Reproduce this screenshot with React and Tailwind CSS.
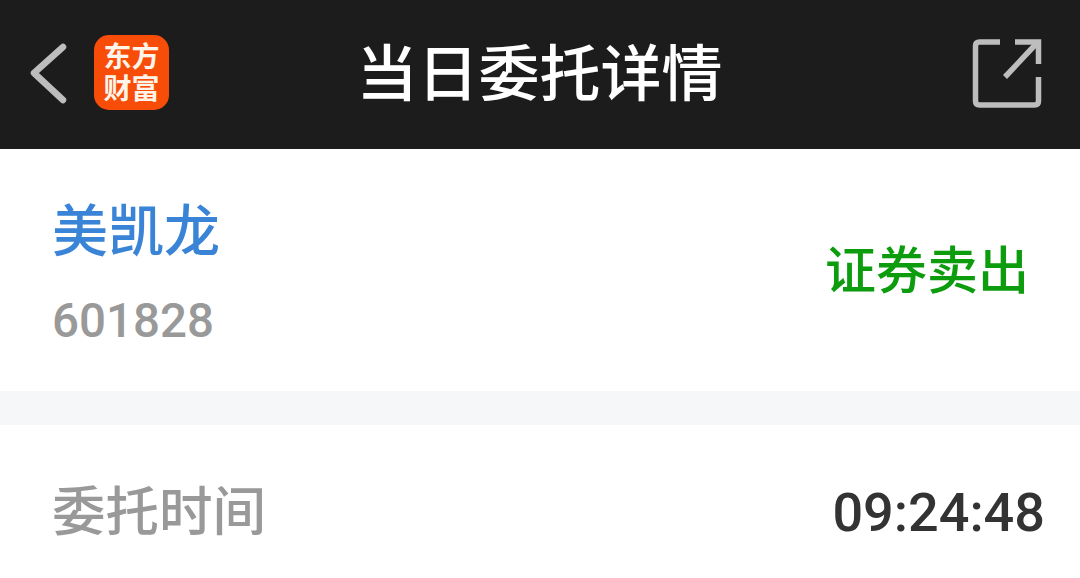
import React from 'react'

function Logo() {
  return (
    <div className="w-[75px] h-[75px] rounded-[15px] bg-[#f84d08] flex flex-col items-center justify-center text-[#fff4ea] font-bold text-[28px] leading-[32px] pt-[2px]">
      <span>东方</span>
      <span>财富</span>
    </div>
  )
}

export default function App() {
  return (
    <div className="w-[1080px] h-[578px] overflow-hidden bg-white font-['Roboto','Noto_Sans_CJK_SC',sans-serif]">
      <header className="h-[149px] bg-[#1c1c1c] grid grid-cols-[1fr_auto_1fr] items-center pl-[28px] pr-[36px]">
        <div className="flex items-center gap-[26px] mb-[4px]">
          <svg width="40" height="64" viewBox="0 0 40 64" fill="none" stroke="#bdbdbd" strokeWidth="6.5" strokeLinecap="round" strokeLinejoin="round">
            <path d="M35 6 L6 32 L35 59" />
          </svg>
          <Logo />
        </div>
        <h1 className="text-white text-[61px] font-medium ml-[7px] mt-[2px]">当日委托详情</h1>
        <div className="flex justify-end mb-[4px]">
          <svg width="72" height="72" viewBox="0 0 72 72" fill="none" stroke="#bdbdbd" strokeWidth="5.5">
            <path d="M28 5 H7.5 Q3.5 5 3.5 9 V64 Q3.5 68 7.5 68 H62.5 Q66.5 68 66.5 64 V40" />
            <path d="M43 5 H66.5 V27" />
            <path d="M64 7 L33 40" />
          </svg>
        </div>
      </header>
      <section className="h-[242px] flex items-center justify-between pl-[52px] pr-[51px]">
        <div className="pt-[7px]">
          <div className="text-[#3a84d8] text-[56px] font-medium leading-[64px]">美凯龙</div>
          <div className="text-[#999999] text-[47.5px] font-medium leading-[54px] mt-[30px]">601828</div>
        </div>
        <div className="text-[#0d9c0d] text-[51px] font-medium pt-[5px]">证券卖出</div>
      </section>
      <div className="h-[34px] bg-[#f6f7f9]" />
      <section className="h-[153px] flex justify-between pl-[52px] pr-[35px] pt-[57px]">
        <div className="text-[#999999] text-[53.5px] font-medium leading-[62px]">委托时间</div>
        <div className="text-[#333333] text-[54px] font-medium leading-[62px]">09:24:48</div>
      </section>
    </div>
  )
}
